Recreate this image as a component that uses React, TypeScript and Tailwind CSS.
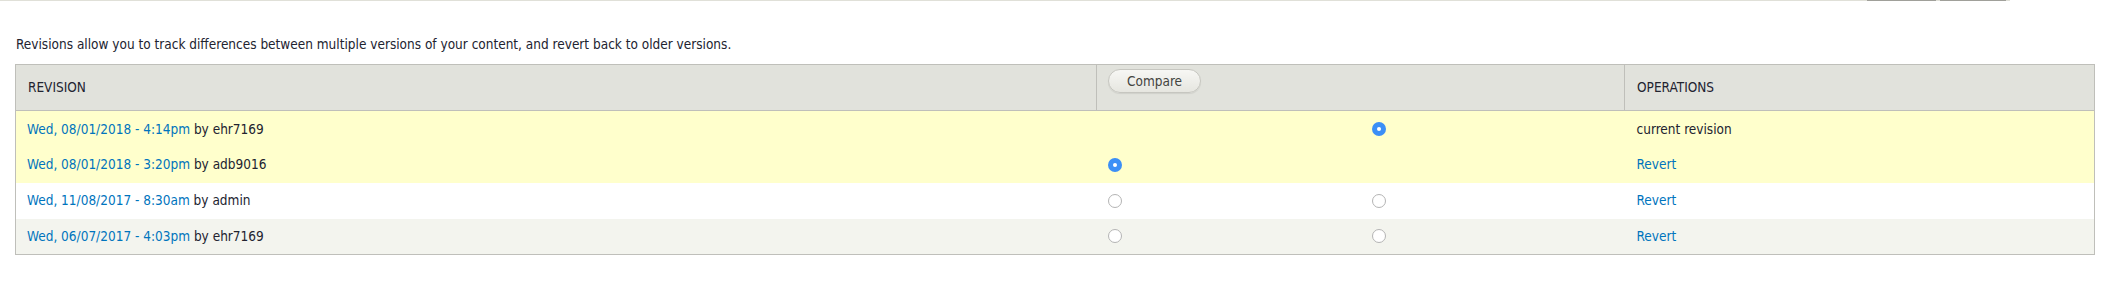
import React from 'react';

type Row = {
  date: string;
  author: string;
  left: 'on' | 'off' | null;
  right: 'on' | 'off' | null;
  op: 'current' | 'revert';
  tone: 'current' | 'odd' | 'even';
};

const rows: Row[] = [
  { date: 'Wed, 08/01/2018 - 4:14pm', author: 'ehr7169', left: null, right: 'on', op: 'current', tone: 'current' },
  { date: 'Wed, 08/01/2018 - 3:20pm', author: 'adb9016', left: 'on', right: null, op: 'revert', tone: 'current' },
  { date: 'Wed, 11/08/2017 - 8:30am', author: 'admin', left: 'off', right: 'off', op: 'revert', tone: 'odd' },
  { date: 'Wed, 06/07/2017 - 4:03pm', author: 'ehr7169', left: 'off', right: 'off', op: 'revert', tone: 'even' },
];

const Radio: React.FC<{ state: 'on' | 'off' }> = ({ state }) =>
  state === 'on' ? (
    <span className="flex w-[14px] h-[14px] rounded-full bg-[#3b8ff6] items-center justify-center">
      <span className="w-[4px] h-[4px] rounded-full bg-white"></span>
    </span>
  ) : (
    <span className="block w-[14px] h-[14px] rounded-full bg-white border border-[#b4b4b4]"></span>
  );

export default function App() {
  const toneClass = {
    current: 'bg-[#ffffcc]',
    odd: 'bg-white',
    even: 'bg-[#f3f4ee]',
  };

  return (
    <div className="w-[2105px] h-[297px] bg-white text-[#222330] text-[13.5px] font-['DejaVu_Sans_Condensed','DejaVu_Sans',sans-serif] font-stretch-condensed">
      {/* tabs strip bottom edge */}
      <div className="flex w-[2010px] h-px bg-[#e0e0d8]">
        <div className="w-[1867px]"></div>
        <div className="w-[69px] h-[1px] bg-[#a0a09a]"></div>
        <div className="w-[4px]"></div>
        <div className="w-[66px] h-[1px] bg-[#a0a09a]"></div>
      </div>

      <div className="pl-[15px]">
        <p className="mt-[34px] leading-[18px] pl-px">
          Revisions allow you to track differences between multiple versions of your content, and revert back to older versions.
        </p>

        <table className="mt-[11px] w-[2080px] table-fixed border-collapse border border-[#bfbfba]">
          <colgroup>
            <col className="w-[1081px]" />
            <col className="w-[264px]" />
            <col className="w-[264px]" />
            <col />
          </colgroup>
          <thead>
            <tr className="bg-[#e1e2dc] h-[46px]">
              <th className="px-[12px] text-left font-normal uppercase border-b border-r border-[#bfbfba]">Revision</th>
              <th colSpan={2} className="px-[11px] text-left font-normal border-b border-r border-[#bfbfba] align-top pt-[4px]">
                <button className="h-[24px] px-[18px] rounded-full border border-[#c6c6c0] bg-gradient-to-b from-[#f7f7f4] to-[#e6e6e0] text-[#44443f] leading-[22px] shadow-[0_1px_1px_rgba(0,0,0,0.08)]">
                  Compare
                </button>
              </th>
              <th className="px-[12px] text-left font-normal uppercase border-b border-[#bfbfba]">Operations</th>
            </tr>
          </thead>
          <tbody>
            {rows.map((r, i) => (
              <tr key={i} className={`${toneClass[r.tone]} h-[36px]`}>
                <td className="px-[11px]">
                  <a className="text-[#0074bd]">{r.date}</a> by {r.author}
                </td>
                <td className="px-[11px]">{r.left && <Radio state={r.left} />}</td>
                <td className="px-[11px]">{r.right && <Radio state={r.right} />}</td>
                <td className="px-[12px]">
                  {r.op === 'current' ? 'current revision' : <a className="text-[#0074bd]">Revert</a>}
                </td>
              </tr>
            ))}
          </tbody>
        </table>
      </div>
    </div>
  );
}
